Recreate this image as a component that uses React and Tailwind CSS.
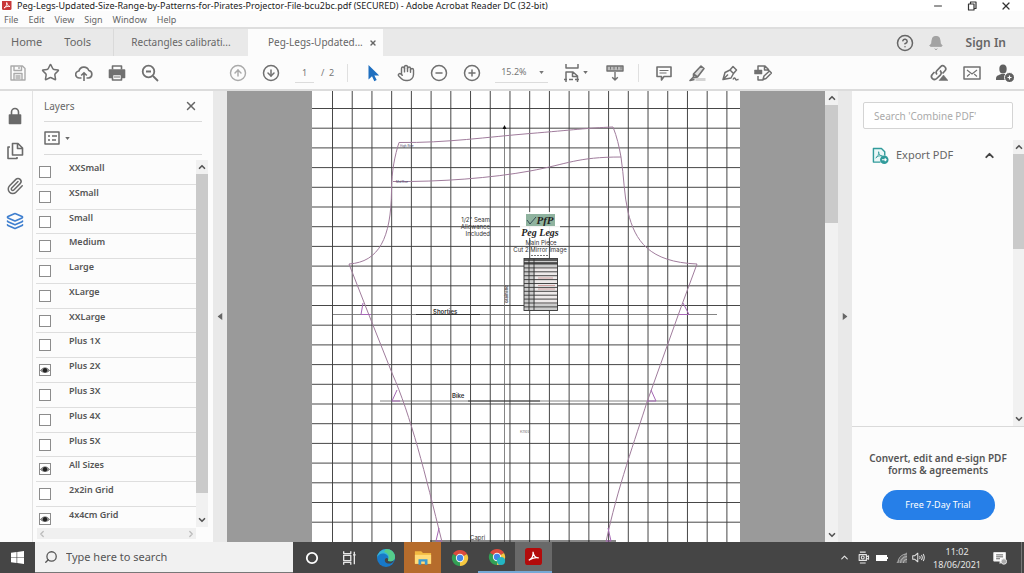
import { useState } from 'react'
import {
    Bell,
    ChevronDown,
    ChevronLeft,
    ChevronRight,
    ChevronUp,
    CircleArrowDown,
    CircleArrowUp,
    CircleHelp,
    CircleMinus,
    CirclePlus,
    Hand,
    Layers,
    Minus,
    Paperclip,
    Search,
    Star,
    X,
} from 'lucide-react'

const LAYERS = [
    { name: 'XXSmall' },
    { name: 'XSmall' },
    { name: 'Small' },
    { name: 'Medium' },
    { name: 'Large' },
    { name: 'XLarge' },
    { name: 'XXLarge' },
    { name: 'Plus 1X' },
    { name: 'Plus 2X', visible: true },
    { name: 'Plus 3X' },
    { name: 'Plus 4X' },
    { name: 'Plus 5X' },
    { name: 'All Sizes', visible: true },
    { name: '2x2in Grid' },
    { name: '4x4cm Grid', visible: true },
]

const GRID = 19.7

function Icon({ children, className = 'h-[18px] w-[18px]', stroke = 1.6, box = '0 0 18 18' }) {
    return (
        <svg viewBox={box} className={className} fill="none" stroke="currentColor" strokeWidth={stroke} strokeLinejoin="round" aria-hidden="true">
            {children}
        </svg>
    )
}

function Caret({ className = 'h-[3px] w-[5px]' }) {
    return (
        <svg viewBox="0 0 6 4" className={className} fill="currentColor" aria-hidden="true">
            <path d="M0 0h6L3 4z" />
        </svg>
    )
}

function ToolButton({ label, children, className = 'text-[#707070]' }) {
    return (
        <button type="button" aria-label={label} className={`grid h-8 w-[33px] shrink-0 place-items-center ${className}`}>
            {children}
        </button>
    )
}

function TitleBar() {
    return (
        <header className="bg-white">
            <div className="flex h-[11px] items-center pr-3">
                <svg viewBox="0 0 10 10" className="ml-[2px] h-[10px] w-[10px] shrink-0" aria-hidden="true">
                    <rect x="0" y="-1" width="9.5" height="10" rx="1.5" fill="#c8383a" />
                    <path d="M2 7c2-1 3-3 2.700-5.500C5 4 6.500 5.500 8 5.500 6 5 4 5.500 2 7z" fill="none" stroke="#fff" strokeWidth="0.9" />
                </svg>
                <h1 className="ml-[5px] text-[9px] leading-[11px] whitespace-nowrap text-[#222]">
                    Peg-Legs-Updated-Size-Range-by-Patterns-for-Pirates-Projector-File-bcu2bc.pdf (SECURED) - Adobe Acrobat Reader DC (32-bit)
                </h1>
                <div className="ml-auto flex items-center gap-[22px] text-[#333]">
                    <button type="button" aria-label="Minimize"><Minus className="h-3 w-3" strokeWidth={2} /></button>
                    <button type="button" aria-label="Restore">
                        <Icon box="0 0 12 12" className="h-3 w-3" stroke={1.2}>
                            <path d="M2.500 4h5.500v6H2.500zM4.500 4V2h5.500v6.500H8" />
                        </Icon>
                    </button>
                    <button type="button" aria-label="Close"><X className="h-3 w-3" strokeWidth={2.4} /></button>
                </div>
            </div>
            <nav className="flex h-4 items-center gap-[10px] bg-[#fcfcfc] pt-[2px] pl-1 text-[9px] leading-[12px] text-[#666]">
                {['File', 'Edit', 'View', 'Sign', 'Window', 'Help'].map((item) => (
                    <button key={item} type="button">{item}</button>
                ))}
            </nav>
        </header>
    )
}

function TabBar() {
    return (
        <div className="flex h-[29px] items-stretch border-t-2 border-[#dedede] bg-[#e9e9e9] text-[#666]">
            <div className="flex w-[114px] items-center gap-[22px] border-r border-[#dadada] pl-[11px] text-[11px]">
                <button type="button">Home</button>
                <button type="button">Tools</button>
            </div>
            <button type="button" className="w-[134px] text-[10px]">Rectangles calibrati...</button>
            <div className="flex w-[135px] items-center justify-between bg-[#fcfcfc] pr-[6px] pl-5 text-[10px]">
                <button type="button">Peg-Legs-Updated...</button>
                <button type="button" aria-label="Close tab"><X className="h-2 w-2" strokeWidth={4} /></button>
            </div>
            <div className="ml-auto flex items-center pr-[18px]">
                <button type="button" aria-label="Help"><CircleHelp className="h-[18px] w-[18px]" strokeWidth={2} /></button>
                <button type="button" aria-label="Notifications" className="ml-[14px] text-[#a3a3a3]">
                    <Bell className="h-4 w-4" fill="currentColor" strokeWidth={1.5} />
                </button>
                <button type="button" className="ml-[22px] text-[12px] font-semibold">Sign In</button>
            </div>
        </div>
    )
}

function Toolbar() {
    return (
        <div className="flex h-[35px] items-center border-b-2 border-[#dcdcdc] bg-[#fcfcfc] px-[1px]">
            <ToolButton label="Save" className="text-[#aaa]">
                <Icon stroke={1.4}>
                    <path d="M2 2h11.500L16 4.500V16H2zM5 2v4.500h7.500V2M10 3v2M5 16V9.500h8V16M6.500 12h5M6.500 14h5" />
                </Icon>
            </ToolButton>
            <ToolButton label="Favourite"><Star className="h-[19px] w-[19px]" strokeWidth={1.9} /></ToolButton>
            <ToolButton label="Upload">
                <Icon>
                    <path d="M6.500 14H4.500a3.500 3.500 0 0 1-.6-7A5.200 5.200 0 0 1 13.800 6.500 3.800 3.800 0 0 1 13.500 14h-2M9 17V9M6.200 11.500 9 8.700l2.800 2.800" />
                </Icon>
            </ToolButton>
            <ToolButton label="Print">
                <Icon>
                    <path d="M4.500 5.500V2h9v3.500" />
                    <path d="M1.500 6h15v7.500h-15z" fill="currentColor" />
                    <path d="M4.500 10.500h9V16h-9z" fill="#fcfcfc" />
                    <path d="M6 13h6" strokeWidth="1" />
                </Icon>
            </ToolButton>
            <ToolButton label="Find">
                <Icon stroke={1.8}>
                    <circle cx="7.500" cy="7.500" r="5.800" />
                    <path d="m12 12 5 5M5 7.500h5" />
                </Icon>
            </ToolButton>
            <div className="ml-[55px] flex">
                <ToolButton label="Previous page" className="text-[#aaa]"><CircleArrowUp className="h-[18px] w-[18px]" strokeWidth={1.9} /></ToolButton>
                <ToolButton label="Next page"><CircleArrowDown className="h-[18px] w-[18px]" strokeWidth={2} /></ToolButton>
            </div>
            <label className="ml-2 flex items-center gap-[7px] text-[9px] text-[#777]">
                <input aria-label="Page number" defaultValue="1" className="h-[21px] w-[19px] border-b border-[#dcdcdc] bg-transparent text-center" />
                <span>/&nbsp; 2</span>
            </label>
            <span className="ml-[13px] h-[18px] w-px bg-[#e0e0e0]" />
            <div className="ml-2 flex">
                <ToolButton label="Select" className="text-[#1f6fc0]">
                    <Icon stroke={0}>
                        <path d="M4.500 1v14.500l3.500-3.300 2.300 5 2.400-1.100-2.300-4.700h4.800z" fill="currentColor" />
                    </Icon>
                </ToolButton>
                <ToolButton label="Pan"><Hand className="h-[18px] w-[18px]" strokeWidth={1.9} /></ToolButton>
                <ToolButton label="Zoom out"><CircleMinus className="h-[18px] w-[18px]" strokeWidth={2} /></ToolButton>
                <ToolButton label="Zoom in"><CirclePlus className="h-[18px] w-[18px]" strokeWidth={2} /></ToolButton>
            </div>
            <div className="ml-[7px] flex h-[21px] w-[53px] items-center border-b border-[#dcdcdc] pr-1 pl-[6px] text-[#777]">
                <select aria-label="Zoom level" className="min-w-0 flex-1 appearance-none bg-transparent text-[9px]">
                    <option>15.2%</option>
                    <option>25%</option>
                    <option>50%</option>
                </select>
                <Caret />
            </div>
            <button type="button" aria-label="Fit width" className="ml-[15px] flex items-center gap-[2px] text-[#707070]">
                <Icon>
                    <path d="M3 0v4h12V0M3 18V8h7l4.500 4V18M9.500 8v4.500h5M1 15.500h3M6 15.500h4M12 15.500h4" strokeWidth="1.500" />
                </Icon>
                <Caret />
            </button>
            <div className="ml-[10px]">
                <ToolButton label="Scroll mode">
                    <Icon stroke={1.4}>
                        <path d="M1 2h16v5H1z" fill="#bbb" />
                        <path d="M4.500 2.500v3M8 2.500v3M11.500 2.500v3M15 2.500v3" strokeWidth="0.9" />
                        <path d="M9 8v8M6.200 13.200 9 16l2.800-2.800" />
                    </Icon>
                </ToolButton>
            </div>
            <span className="ml-[7px] h-[18px] w-px bg-[#e0e0e0]" />
            <div className="ml-2 flex">
                <ToolButton label="Comment">
                    <Icon>
                        <path d="M2 3h14v9.500H9L6.500 16v-3.500H2z" />
                        <path d="M4.500 6.500h9M4.500 9h7" strokeWidth="1.200" />
                    </Icon>
                </ToolButton>
                <ToolButton label="Highlight">
                    <Icon>
                        <path d="M7.500 15.500h10" stroke="#d4d4d4" strokeWidth="3" />
                        <path d="M5.500 10 13 2l3 2.500-6.500 8.500-4 .8zM5.500 10l4 3M5.500 13l-3.500 3.500 4.500-1" fill="#ddd" />
                    </Icon>
                </ToolButton>
                <ToolButton label="Sign">
                    <Icon stroke={1.5}>
                        <path d="M2 15.500 4 8.500l5-2.500 3.500 3.500-2.500 4.500zM9 6l3-3.500L15.500 6l-3 3.500M2 15.500l5-5M12 15.500c1-2 2-2 2.500-.5s1 1 3 .3" />
                    </Icon>
                </ToolButton>
                <ToolButton label="Edit document">
                    <Icon stroke={1.5}>
                        <path d="M4 6V2h7l3.500 3.500V7M10.500 2v4h4M4 12v4h5.500M9 15.500 10 12l5.500-5 2 2L12 14.500z" />
                        <path d="M0.500 6h7.500v4H0.500z" fill="currentColor" strokeWidth="0.500" />
                    </Icon>
                </ToolButton>
            </div>
            <div className="ml-auto flex pr-[2px]">
                <ToolButton label="Share link">
                    <Icon stroke={1.7}>
                        <path d="M7 10.500a3 3 0 0 1 0-4L10.500 2.800a3 3 0 0 1 4.300 4.200L12.500 9.500M10 6.500a3 3 0 0 1 .5 4.300L6.700 14.500A3 3 0 0 1 2.400 10.300L4.500 8" />
                        <path d="M9 16.500 13.500 11l4.500 5.500z" fill="currentColor" strokeWidth="0.500" />
                    </Icon>
                </ToolButton>
                <ToolButton label="Email">
                    <Icon stroke={1.5}>
                        <path d="M1 3h16v12H1z" />
                        <path d="m4 6 5 4 5-4M4 12.500 6.800 10M14 12.500 11.200 10" strokeWidth="1.100" />
                    </Icon>
                </ToolButton>
                <ToolButton label="Add people" className="text-[#606060]">
                    <Icon stroke={0}>
                        <ellipse cx="7" cy="5" rx="3.700" ry="4.500" fill="currentColor" />
                        <path d="M0 15c0-4 3-3.500 5-5h4c1 1 3 1 4 2l-2 4H0z" fill="currentColor" />
                        <circle cx="13.500" cy="13.500" r="5" fill="#606060" stroke="#fcfcfc" strokeWidth="1" />
                        <path d="M13.500 11.500v4M11.500 13.500h4" stroke="#fff" strokeWidth="1.200" />
                    </Icon>
                </ToolButton>
            </div>
        </div>
    )
}

function LayerRow({ name, visible = false }) {
    const [checked, setChecked] = useState(visible)

    return (
        <li className="min-h-0 flex-1 border-b border-[#dedede] last:h-5 last:flex-none last:border-b-0">
            <label className="flex items-start gap-[18px] pl-[3px]">
                <span className="relative mt-[6px] h-3 w-3 shrink-0">
                    <input
                        type="checkbox"
                        checked={checked}
                        onChange={() => setChecked(!checked)}
                        className="block h-3 w-3 appearance-none border border-[#8c8c8c] bg-white"
                    />
                    {checked && (
                        <svg viewBox="0 0 12 12" className="pointer-events-none absolute inset-0" aria-hidden="true">
                            <path d="M1.500 6.500c2.500-3.500 6.500-3.500 9 0-2.500 2.500-6.500 2.500-9 0z" fill="#999" stroke="#555" strokeWidth="0.800" />
                            <circle cx="6" cy="6.200" r="2.200" fill="#222" />
                        </svg>
                    )}
                </span>
                <span className="mt-[2px] text-[9px] leading-3 font-semibold text-[#555]">{name}</span>
            </label>
        </li>
    )
}

function VerticalScrollbar({ thumb, className = 'w-[13px]' }) {
    return (
        <div className={`flex shrink-0 flex-col items-center bg-[#f1f1f1] text-[#555] ${className}`}>
            <ChevronUp className="my-[2px] h-[10px] w-[10px] shrink-0" strokeWidth={4} />
            <div className="min-h-0 w-full flex-1">
                <div className={`w-full bg-[#cacaca] ${thumb}`} />
            </div>
            <ChevronDown className="my-[2px] h-[10px] w-[10px] shrink-0" strokeWidth={4} />
        </div>
    )
}

function LayersPanel() {
    return (
        <aside className="flex w-[213px] shrink-0 bg-[#fcfcfc]">
            <nav className="flex w-[33px] flex-col items-center gap-[17px] border-r border-[#e2e2e2] pt-4 pr-[2px] text-[#6a6a6a]">
                <button type="button" aria-label="Security">
                    <Icon>
                        <path d="M5.500 8V5a3.500 3.500 0 0 1 7 0v3" />
                        <path d="M3.500 8h11v8.500h-11z" fill="currentColor" />
                    </Icon>
                </button>
                <button type="button" aria-label="Page thumbnails">
                    <Icon>
                        <path d="M6.500 1.500h5.500L16.500 6v7h-10zM11.500 1.500V6.500h5M4 5H2v11.500h9v-1.500" />
                    </Icon>
                </button>
                <button type="button" aria-label="Attachments"><Paperclip className="h-[18px] w-[18px]" strokeWidth={2} /></button>
                <button type="button" aria-label="Layers" className="text-[#3f7fcf]"><Layers className="h-[18px] w-[18px]" strokeWidth={2.2} /></button>
            </nav>
            <section className="flex min-w-0 flex-1 flex-col pr-[5px] pb-[3px]">
                <div className="mr-[6px] ml-[11px] flex h-[31px] items-center justify-between border-b border-[#dadada] text-[#666]">
                    <h2 className="text-[10px]">Layers</h2>
                    <button type="button" aria-label="Close panel" className="mr-1"><X className="h-[14px] w-[14px]" strokeWidth={2.5} /></button>
                </div>
                <div className="mr-[6px] ml-[11px] flex h-[33px] items-center border-b border-[#dadada] text-[#6a6a6a]">
                    <button type="button" aria-label="Layer options" className="flex items-center gap-[5px]">
                        <Icon box="0 0 16 14" className="h-[14px] w-4" stroke={1.5}>
                            <path d="M1 1h14v12H1z" />
                            <path d="M4 5h2M4 9h2M8 5h5M8 9h4" />
                        </Icon>
                        <Caret />
                    </button>
                </div>
                <div className="mt-[5px] flex min-h-0 flex-1">
                    <ul className="flex min-h-0 flex-1 flex-col overflow-hidden pl-[3px]">
                        {LAYERS.map((layer) => (
                            <LayerRow key={layer.name} {...layer} />
                        ))}
                    </ul>
                    <VerticalScrollbar thumb="h-[94%]" className="w-3" />
                </div>
                <div className="mt-[1px] mr-3 ml-1 flex h-[11px] items-center justify-between bg-[#f0f0f0] text-[#bbb]">
                    <ChevronLeft className="h-[10px] w-[10px]" strokeWidth={3} />
                    <ChevronRight className="h-[10px] w-[10px]" strokeWidth={3} />
                </div>
            </section>
        </aside>
    )
}

function PatternPage() {
    const columns = Array.from({ length: 21 }, (_, i) => 20.5 + i * 19.72)
    const rows = Array.from({ length: 22 }, (_, i) => 17.5 + i * GRID)
    const sizeRows = Array.from({ length: 12 }, (_, i) => 173 + i * 3.9)

    return (
        <svg viewBox="0 0 428 451" preserveAspectRatio="xMidYMin slice" className="h-full w-full" role="img" aria-label="Peg Legs pattern main piece">
            <g stroke="#3d3d3d" strokeWidth="0.95">
                {columns.map((x) => <path key={x} d={`M${x} 0V451`} />)}
                {rows.map((y) => <path key={y} d={`M0 ${y}H428`} />)}
            </g>

            <g fill="none" stroke="#666" strokeWidth="0.8">
                <path d="M192.500 36V451" />
                <path d="M21 223.500H405M68 310H356" />
                <path d="M104 223.500h64M156 310h72" stroke="#222" />
                <path d="M118 450H304" stroke="#111" strokeWidth="1.200" />
            </g>
            <path d="M190.500 38l2-4 2 4z" fill="#111" />

            <g fill="none" stroke="#a07c9c" strokeWidth="1">
                <path d="M87 51.500C135 52 175 46 218 42.500S275 37 301 36C305 46 307 55 309 66 312 86 312 104 316 121 323 150 337 171 385 173L368 219 335 311C324 346 305 398 294 451" />
                <path d="M87 51.500C83 64 79.500 80 79.500 100 79 147 67 171 37 173L55 219 80 282C99 325 113 382 130 451" />
                <path d="M81 90.500C128 91 180 87 218 80S265 66 309 66" />
                <path d="M51 212 49 223.500h10M371 212l6 11.500h-10M85 299l-5 11h8M339 299l5 11h-9M127 437l-3 13h6M296 437l3 13h-5" stroke="#a566b5" />
            </g>

            <rect x="208" y="121" width="40" height="26" fill="#fff" opacity="0.9" />
            <g fill="#333" fontFamily="Inter, sans-serif" fontSize="7">
                <text x="178" y="131" textAnchor="end" fontSize="6">1/2&quot; Seam</text>
                <text x="178" y="138" textAnchor="end" fontSize="6">Allowance</text>
                <text x="178" y="145" textAnchor="end" fontSize="6">Included</text>
                <text x="229" y="154" textAnchor="middle" fontSize="6">Main Piece</text>
                <text x="228" y="161" textAnchor="middle" fontSize="6">Cut 2 Mirror Image</text>
                <text x="121" y="223" fontSize="6" fontWeight="600">Shorties</text>
                <text x="140" y="307" fontSize="6" fontWeight="600">Bike</text>
                <text x="158" y="449" fontSize="6">Capri</text>
                <text x="208" y="342" fontSize="4" fill="#777">Knee</text>
                <text x="196" y="212" fontSize="4" fontWeight="700" transform="rotate(-90 196 212)">Grainline</text>
                <text x="88" y="56" fontSize="3" fill="#446">High Rise</text>
                <text x="84" y="92" fontSize="3" fill="#446">Mid Rise</text>
            </g>

            <rect x="214" y="123" width="29" height="12" fill="#8fb39f" />
            <g fontFamily="Liberation Serif, serif" fontStyle="italic" fontWeight="700" fill="#222">
                <path d="M215 129l3 4 6-7" fill="none" stroke="#234" strokeWidth="0.8" />
                <text x="233" y="133" textAnchor="middle" fontSize="11">PfP</text>
                <text x="228" y="145" textAnchor="middle" fontSize="10">Peg Legs</text>
            </g>
            <path d="M219 164.500h18" stroke="#777" strokeDasharray="2 1" />

            <g stroke="#333" strokeWidth="0.9">
                <rect x="212" y="167.500" width="33.500" height="52" fill="#ccc" />
                <rect x="223" y="176" width="22" height="37" fill="#eeeaea" stroke="none" />
                {sizeRows.map((y) => <path key={y} d={`M212 ${y}h33.500`} />)}
                <path d="M212 169h33.500M212 172h33.500" strokeWidth="1.500" />
                <path d="M217 168v51M222 168v51" />
                <path d="M226 187h15M226 194.500h17M226 198h17" stroke="#c99" />
            </g>
        </svg>
    )
}

function DocumentView() {
    return (
        <main className="flex min-w-0 flex-1">
            <div className="grid w-[14px] shrink-0 place-items-center bg-[#e9e9e9]">
                <button type="button" aria-label="Collapse panel" className="rotate-90 text-[#666]"><Caret className="h-[5px] w-[8px]" /></button>
            </div>
            <div className="flex min-w-0 flex-1 justify-center bg-[#9a9a9a]">
                <div className="w-[428px] max-w-full overflow-hidden bg-white">
                    <PatternPage />
                </div>
            </div>
            <VerticalScrollbar thumb="h-[28%]" />
            <div className="grid w-[14px] shrink-0 place-items-center bg-[#e9e9e9]">
                <button type="button" aria-label="Collapse tools" className="-rotate-90 text-[#666]"><Caret className="h-[5px] w-[8px]" /></button>
            </div>
        </main>
    )
}

function ToolsPanel() {
    return (
        <aside className="flex w-[172px] shrink-0 flex-col bg-[#fcfcfc]">
            <input
                type="search"
                aria-label="Search tools"
                placeholder="Search 'Combine PDF'"
                className="mx-[11px] mt-[11px] h-[27px] rounded-[2px] border border-[#d4d4d4] bg-white px-[10px] text-[10px] placeholder:text-[#aaa]"
            />
            <div className="mt-[11px] flex min-h-0 flex-1 border-b border-[#dadada]">
                <button type="button" className="flex h-[30px] flex-1 items-center pr-[17px] pl-5 text-[11px] text-[#666]">
                    <Icon stroke={1.5} className="mr-[7px] h-[17px] w-[17px] text-[#319b9b]">
                        <path d="M9 16H1.500V1.500H10L13.500 5v4" fill="#eaf7f7" />
                        <path d="M4 11.500c2-1 3.500-4 3-6.500 0 3 2 4.500 4 4.500-3-.5-5 0-7 2z" strokeWidth="0.9" />
                        <circle cx="13" cy="13.500" r="4.500" fill="currentColor" strokeWidth="0" />
                        <path d="M10.500 13.500h4.500M13.500 12l1.500 1.500-1.500 1.500" stroke="#fff" strokeWidth="1.200" />
                    </Icon>
                    Export PDF
                    <ChevronUp className="ml-auto h-[13px] w-[13px] text-[#444]" strokeWidth={3.5} />
                </button>
                <VerticalScrollbar thumb="h-[37%]" className="w-[11px]" />
            </div>
            <div className="flex h-[115px] flex-col items-center pt-[25px]">
                <p className="text-center text-[10px] leading-[12px] font-semibold text-[#555]">
                    Convert, edit and e-sign PDF
                    <br />
                    forms &amp; agreements
                </p>
                <button type="button" className="mt-[14px] h-[30px] w-[113px] rounded-full bg-[#267fe8] text-[9px] text-white">Free 7-Day Trial</button>
            </div>
        </aside>
    )
}

function ChromeLogo({ badge }) {
    return (
        <svg viewBox="0 0 20 20" className="h-[18px] w-[18px]" aria-hidden="true">
            <path d="M10 10 2.200 5.500A9 9 0 0 1 17.800 5.500z" fill="#dc4a3d" />
            <path d="M10 10V19A9 9 0 0 1 2.200 5.500z" fill="#33a055" />
            <path d="M10 10 17.800 5.500A9 9 0 0 1 10 19z" fill="#f6c840" />
            <circle cx="10" cy="10" r="4.600" fill="#f4f4f4" />
            <circle cx="10" cy="10" r="3.500" fill="#4285e8" />
            {badge && <circle cx="14.500" cy="14.500" r="4.500" fill="#24b5c3" />}
        </svg>
    )
}

function TaskButton({ label, children, className = '' }) {
    return (
        <button type="button" aria-label={label} className={`grid h-full w-[37px] place-items-center ${className}`}>
            {children}
        </button>
    )
}

function Taskbar() {
    return (
        <footer className="flex h-[31px] shrink-0 items-stretch bg-[#454545] text-[#e6e6e6]">
            <button type="button" aria-label="Start" className="grid w-[35px] place-items-center">
                <svg viewBox="0 0 14 14" className="h-[13px] w-[13px]" fill="#fff" aria-hidden="true">
                    <path d="M0 2l6-.9v5.600H0zM6.700 1 14 0v6.700H6.700zM0 7.400h6V13l-6-.9zM6.700 7.400H14V14l-7.300-1z" />
                </svg>
            </button>
            <label className="flex w-[258px] items-center gap-2 border-b border-[#777] bg-[#f1f1f1] pl-[9px] text-[#555]">
                <Search className="h-[14px] w-[14px] shrink-0 -scale-x-100" strokeWidth={2.2} />
                <input aria-label="Search" placeholder="Type here to search" className="min-w-0 flex-1 bg-transparent text-[11px] placeholder:text-[#555]" />
            </label>
            <div className="flex">
                <TaskButton label="Cortana">
                    <Icon><circle cx="9" cy="9" r="5.200" stroke="#fff" strokeWidth="1.800" /></Icon>
                </TaskButton>
                <TaskButton label="Task view">
                    <Icon className="h-4 w-4" stroke={1.5}>
                        <path d="M3 6h8v6H3zM3 1.500V4h8V1.500M3 16.500V14h8v2.500M15 2v14M13.500 5.500h3" />
                    </Icon>
                </TaskButton>
                <TaskButton label="Edge">
                    <svg viewBox="0 0 20 20" className="h-5 w-5" aria-hidden="true">
                        <circle cx="10" cy="10" r="9" fill="#1879c8" />
                        <path d="M1 10A9 9 0 0 1 10 1c5 0 9 3.500 9 8 0 3-2.500 4.500-5 4.500-2 0-2.500-1-1.800-2C13.500 8 10 5.500 7 5.500S1.500 7.500 1 10z" fill="#36b6d8" />
                        <path d="M10 1c5 0 9 3.500 9 8 0 3-2.500 4.500-5 4.500-2 0-2.500-1-1.800-2C14 8 12 5 8 4z" fill="#55cd8b" />
                        <path d="M12.200 11.500c-.7 1-.2 2 1.800 2 1.500 0 3-.4 4-1.500-1 3-3.500 4-6 3.500-3-.7-4-3-2.500-5 1-1 2.500-.5 2.700 1z" fill="#454545" />
                    </svg>
                </TaskButton>
                <TaskButton label="File Explorer" className="bg-[#b66c2c]">
                    <svg viewBox="0 0 20 18" className="h-[17px] w-[18px]" aria-hidden="true">
                        <path d="M1 2h7l2 2h9v12H1z" fill="#f3b940" />
                        <path d="M1 6h18v10H1z" fill="#ffdb78" />
                        <path d="M5 17v-6h10v6h-3v-3.500H8V17z" fill="#3b9ad0" />
                    </svg>
                </TaskButton>
                <TaskButton label="Chrome"><ChromeLogo /></TaskButton>
                <TaskButton label="Chrome profile" className="border-b-2 border-[#76a9d6]"><ChromeLogo badge /></TaskButton>
                <TaskButton label="Acrobat Reader" className="border-b-2 border-[#76a9d6] bg-[#696969]">
                    <svg viewBox="0 0 18 18" className="h-[17px] w-[17px]" aria-hidden="true">
                        <rect width="18" height="18" rx="3" fill="#b30b0b" />
                        <path d="M4 13c3-1.500 5-5 4.500-9 .5 4 2.500 6.500 6 6.500-4-1-7 0-10.500 2.500z" fill="none" stroke="#fff" strokeWidth="1.300" />
                    </svg>
                </TaskButton>
            </div>
            <div className="ml-auto flex items-center">
                <ChevronUp className="h-[11px] w-[11px]" strokeWidth={2.5} />
                <Icon className="ml-[7px] h-[13px] w-[13px]" stroke={1.5}>
                    <path d="M3 5h10v8H3zM13 8l3-1.500v5L13 10M4 1.500h8M4 16.500h8" />
                    <circle cx="8" cy="9" r="2" />
                </Icon>
                <svg viewBox="0 0 12 8" className="ml-[6px] h-2 w-3" aria-hidden="true">
                    <path d="M0 1h11v6H0z" fill="#fff" />
                    <path d="M11 3h1v2h-1z" fill="#fff" />
                </svg>
                <svg viewBox="0 0 12 12" className="ml-2 h-[11px] w-[11px]" aria-hidden="true">
                    <path d="M12 0v12H0z" fill="#777" />
                    <path d="M2 12a10 10 0 0 1 10-10M5 12a7 7 0 0 1 7-7M8 12a4 4 0 0 1 4-4" fill="none" stroke="#bbb" />
                </svg>
                <Icon className="ml-[5px] h-[13px] w-[13px]" stroke={1.4}>
                    <path d="M1 6.500h3L8 3v12l-4-3.500H1zM10.500 7q1.500 2 0 4M13 5.500q2.500 3.500 0 7M15.500 4q3 5 0 10" />
                </Icon>
                <time className="ml-2 text-center text-[9px] leading-[13px]" dateTime="2021-06-18T11:02">
                    11:02
                    <br />
                    18/06/2021
                </time>
                <button type="button" aria-label="Notifications" className="mr-[14px] ml-3">
                    <Icon className="h-[14px] w-[14px]" stroke={1.2}>
                        <path d="M1 2h15v11h-4l-3 3v-3H1z" fill="#fff" />
                        <path d="M4 5h9M4 7.500h9M4 10h5" stroke="#555" />
                        <circle cx="14" cy="13.500" r="3.500" fill="#aaa" />
                    </Icon>
                </button>
                <span className="mr-[2px] h-full w-px bg-[#777]" />
            </div>
        </footer>
    )
}

export default function App() {
    return (
        <div className="flex h-screen flex-col overflow-hidden bg-[#fcfcfc] font-['Noto_Sans',sans-serif]">
            <TitleBar />
            <TabBar />
            <Toolbar />
            <div className="flex min-h-0 flex-1">
                <LayersPanel />
                <DocumentView />
                <ToolsPanel />
            </div>
            <Taskbar />
        </div>
    )
}
